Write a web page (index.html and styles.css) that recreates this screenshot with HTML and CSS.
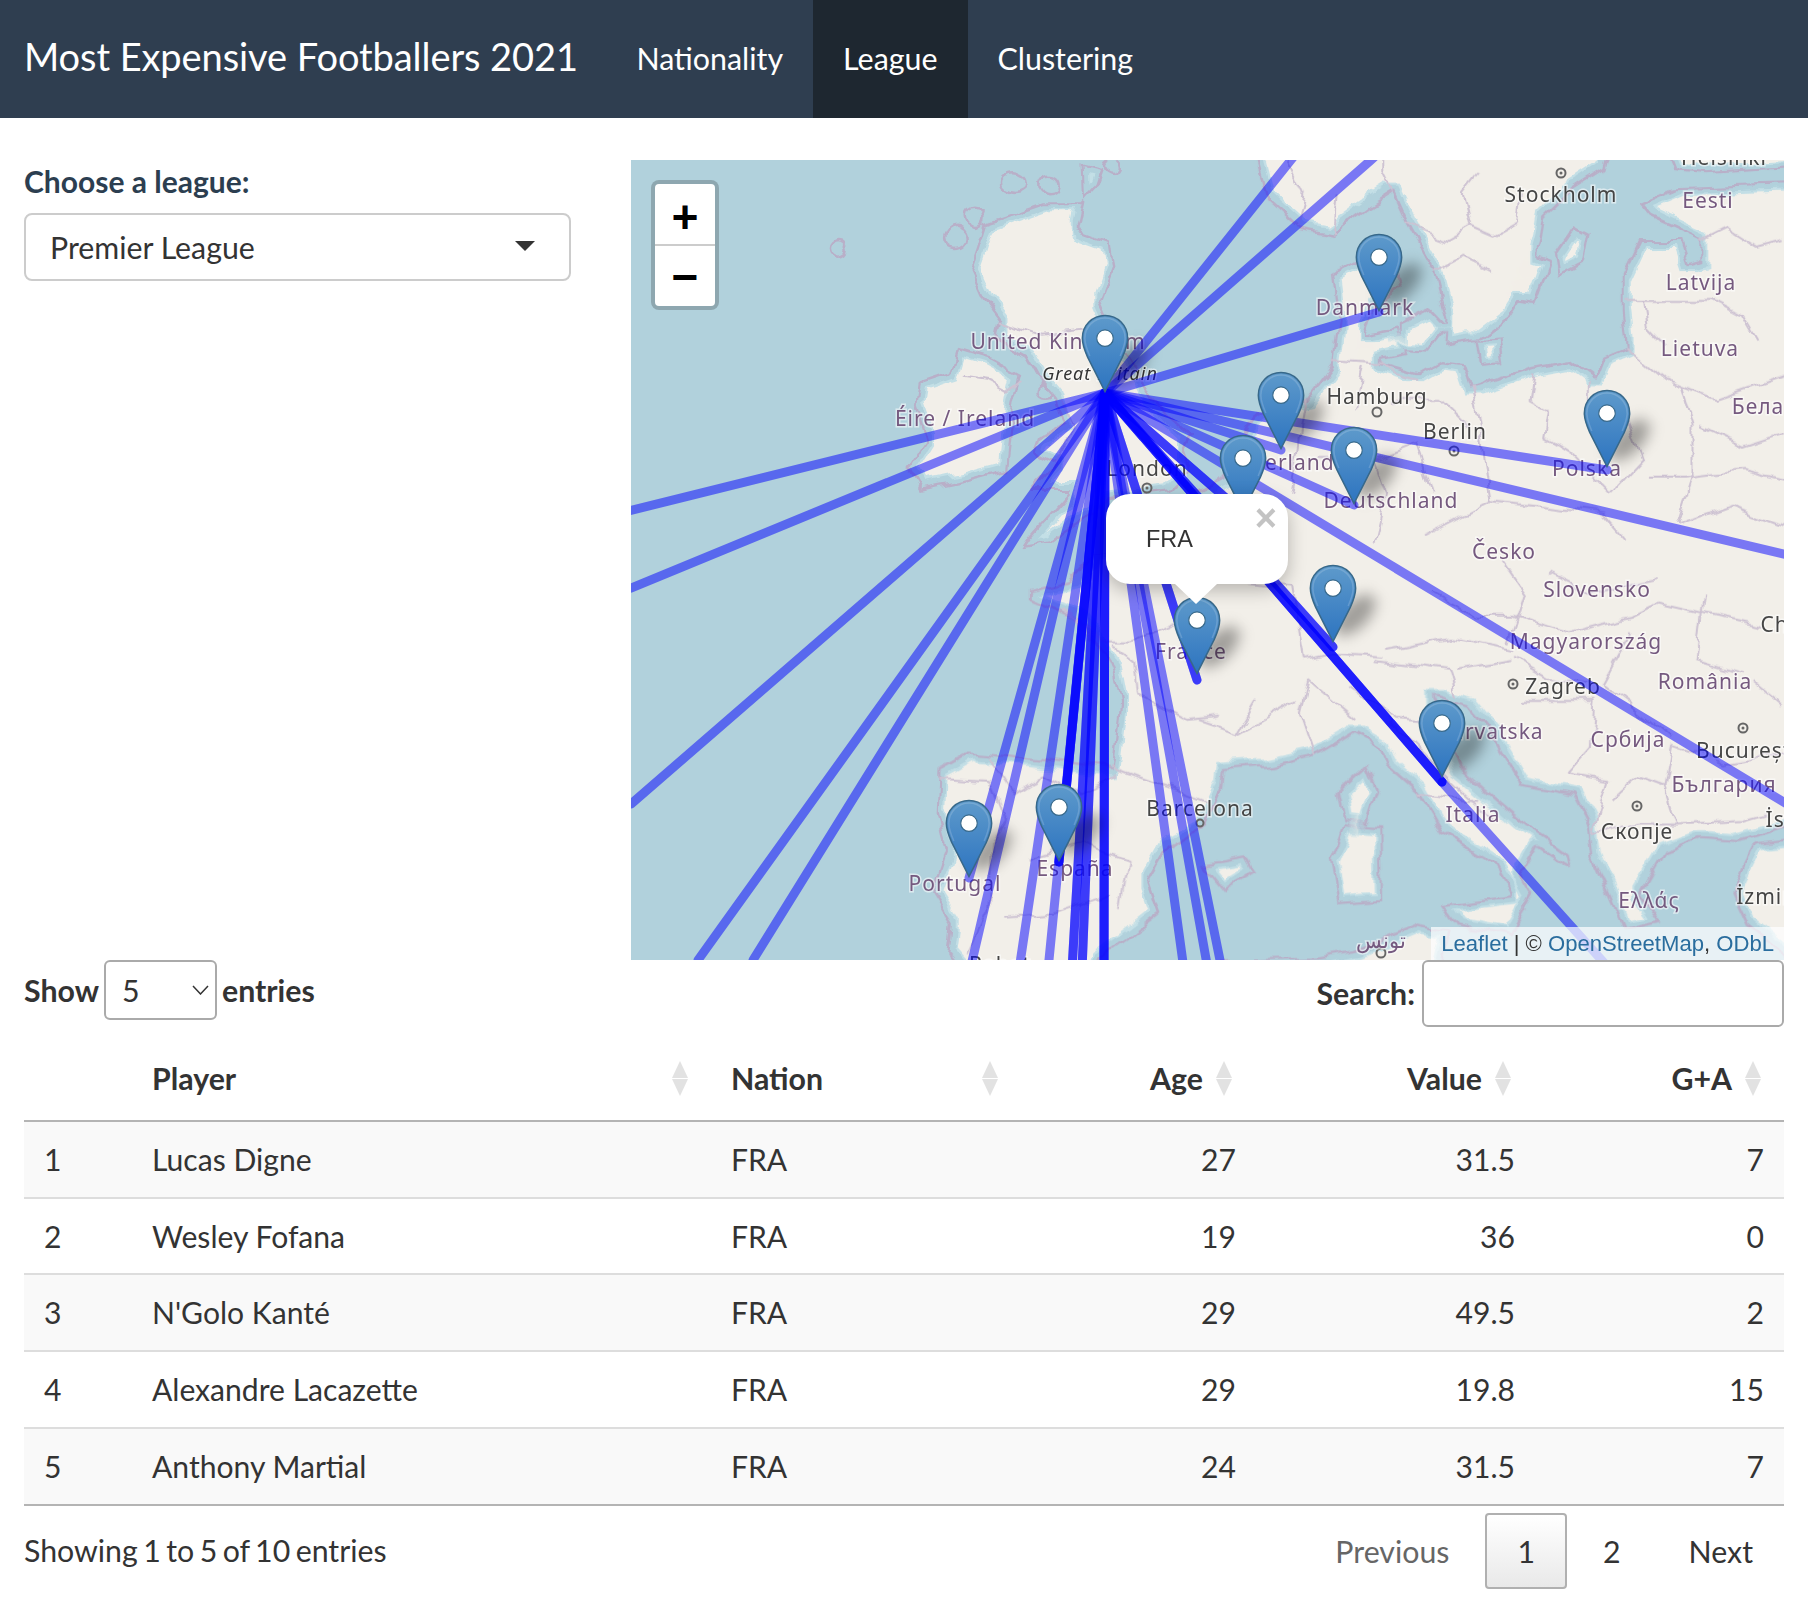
FILE: index.html
```html
<!DOCTYPE html>
<html lang="en">
<head>
<meta charset="utf-8">
<title>Most Expensive Footballers 2021</title>
<link rel="stylesheet" href="styles.css">
</head>
<body>
<nav class="navbar">
  <a class="brand">Most Expensive Footballers 2021</a>
  <a class="tab">Nationality</a>
  <a class="tab active">League</a>
  <a class="tab">Clustering</a>
</nav>
<main class="page">
  <section class="top">
    <div class="side">
      <label class="field-label">Choose a league:</label>
      <div class="selectize"><span>Premier League</span><i class="caret"></i></div>
    </div>
    <div class="map">
      <svg class="map-svg" viewBox="631 160 1153 800" width="1153" height="800" xmlns="http://www.w3.org/2000/svg">
        <defs>
          <linearGradient id="pinfill" x1="0" y1="0" x2="0" y2="1">
            <stop offset="0" stop-color="#5e9acb"/>
            <stop offset="1" stop-color="#2d74c0"/>
          </linearGradient>
          <filter id="erode2"><feMorphology operator="erode" radius="2"/></filter>
          <filter id="erode4"><feMorphology operator="erode" radius="6"/></filter>
          <filter id="erode6"><feMorphology operator="erode" radius="8"/></filter>
          <filter id="wiggle" filterUnits="userSpaceOnUse" x="600" y="130" width="1230" height="860">
            <feTurbulence type="fractalNoise" baseFrequency=".035" numOctaves="3" seed="7" result="n"/>
            <feDisplacementMap in="SourceGraphic" in2="n" scale="14" xChannelSelector="R" yChannelSelector="G"/>
          </filter>
          <symbol id="pin" viewBox="0 0 25 41">
            <path class="pin-body" d="M12.5.7C5.9.7.7 5.900.7 12.500c0 3.200 1.200 6.400 2.800 10L12.500 40.300l9-17.800c1.600-3.600 2.800-6.800 2.800-10C24.300 5.900 19.100.7 12.500.7z"/>
            <path class="pin-glow" d="M12.500 2C6.700 2 2 6.700 2 12.500c0 3 1.100 5.800 2.600 9.300"/>
            <path class="pin-glow" d="M12.500 2C18.300 2 23 6.700 23 12.500c0 3-1.100 5.800-2.600 9.300"/>
            <circle class="pin-hole" cx="12.500" cy="12.500" r="4.300"/>
          </symbol>
          <g id="land">
            <g transform="translate(630 160) scale(.3762 .3333)">
              <polygon points="1200,10 1255,25 1240,75 1195,130 1100,130 1010,165 945,190 925,265 905,330 945,430 985,490 975,540 1050,590 1085,660 1130,720 1150,790 1090,830 1075,880 1130,910 1060,990 1170,990 1060,1130 1040,1165 1120,1150 1280,1020 1440,1000 1500,930 1480,870 1500,830 1390,720 1340,600 1290,510 1255,420 1285,330 1275,245 1190,210 1205,130"/>
              <polygon points="870,560 960,590 1040,640 1020,730 1010,830 1000,930 900,960 770,990 740,930 790,840 760,740 770,670 850,640"/>
            </g>
            <g transform="translate(630 560) scale(.3762 .3333)">
              <polygon points="820,625 900,575 1090,595 1280,625 1300,440 1280,320 1200,190 1060,120 1060,90 1170,60 1230,-20 1568,-20 1568,700 1530,800 1430,860 1380,960 1410,1060 1330,1130 1250,1195 1230,1260 900,1260 840,1180 850,1090 800,1000 840,870 815,770"/>
            </g>
            <g transform="translate(1200 160) scale(.3878 .3333)">
              <polygon points="-240,1240 -166,1146 -77,1025 57,955 120,800 147,748 270,720 340,610 355,480 340,340 400,300 500,300 520,380 450,440 430,520 470,610 560,640 620,600 680,610 700,680 860,620 960,600 1020,650 1040,590 1100,560 1090,460 1090,340 1130,240 1240,240 1260,310 1290,300 1290,240 1160,170 1130,130 1220,85 1580,70 1580,1250 -240,1250"/>
              <polygon points="130,-60 170,120 250,205 340,225 440,140 495,100 530,190 600,340 630,470 625,555 720,540 800,470 850,380 880,250 890,170 960,90 1040,30 1060,-60"/>
              <polygon points="1190,-60 1220,30 1300,40 1580,20 1580,-60"/>
              <polygon points="925,350 915,280 965,195 1005,220 990,310"/>
              <polygon points="815,420 870,285 905,300 865,430"/>
              <polygon points="715,540 775,535 785,610 725,615"/>
              <polygon points="515,490 595,445 640,500 590,575 515,570"/>
              <polygon points="420,525 510,505 530,585 440,605"/>
            </g>
            <g transform="translate(1200 560) scale(.3878 .3333)">
              <polygon points="-20,-20 1580,-20 1580,790 1380,850 1290,840 1200,880 1140,1000 1190,1085 1090,1110 1060,1030 1010,900 1000,800 960,710 830,680 760,540 690,440 600,410 670,620 830,780 950,880 960,930 870,860 830,940 860,1000 830,1060 800,1000 760,920 620,820 560,700 480,620 460,560 400,520 300,590 180,620 65,630 60,680 0,800 -20,800"/>
              <polygon points="1580,830 1430,850 1400,920 1370,1000 1410,1100 1580,1260"/>
              <polygon points="430,610 460,690 430,800 370,790 355,690"/>
              <polygon points="370,795 465,805 470,1020 355,1030 335,900"/>
              <polygon points="620,1030 820,1000 840,1050 800,1130 660,1100"/>
              <polygon points="0,910 120,885 145,935 60,995"/>
              <polygon points="-20,1200 300,1190 400,1170 570,1090 640,1110 610,1260 -20,1260"/>
            </g>
          </g>
        </defs>

        <g class="tiles">
          <rect class="sea" x="631" y="160" width="1153" height="800"/>
          <g class="geo">
            <g transform="translate(630 160) scale(.3762 .3333)">
              <ellipse class="ring" cx="1020" cy="68" rx="34" ry="28"/>
              <ellipse class="ring" cx="1115" cy="75" rx="27" ry="28"/>
              <ellipse class="ring" cx="920" cy="175" rx="25" ry="26"/>
              <ellipse class="ring" cx="865" cy="235" rx="30" ry="32"/>
              <ellipse class="ring" cx="555" cy="265" rx="21" ry="22"/>
              <ellipse class="ring" cx="1100" cy="690" rx="22" ry="20"/>
              <ellipse class="ring" cx="1285" cy="20" rx="25" ry="22"/>
            </g>
            <use href="#land" class="coast-line"/>
            <use href="#land" class="coast-gap"/>
            <use href="#land" class="coast-shallow"/>
            <use href="#land" class="coast-fill"/>

            <g transform="translate(630 160) scale(.3762 .3333)">
              <polyline class="border" points="985,490 1090,530 1180,520 1290,510"/>
              <polyline class="border" points="1130,910 1180,800 1150,720"/>
              <polyline class="border" points="890,650 950,660 1000,690 1040,660"/>
            </g>
            <g transform="translate(630 560) scale(.3762 .3333)">
              <polyline class="border" points="1280,620 1350,650 1450,690 1540,730"/>
              <polyline class="border" points="820,650 960,660 1000,780 960,850 950,1060 900,1180"/>
              <polyline class="border" points="950,590 1020,700 1100,640 1200,700 1300,640"/>
              <polyline class="border" points="1060,900 1200,850 1320,900 1300,1050"/>
              <polyline class="border" points="1000,1070 1130,1060 1280,1000"/>
              <polyline class="border" points="1290,260 1340,300 1350,400 1480,480 1568,470"/>
              <polyline class="border" points="1340,250 1480,180 1568,200"/>
              <polyline class="border" points="1150,150 1270,250 1340,250"/>
            </g>
            <g transform="translate(1200 160) scale(.3878 .3333)">
              <polyline class="border" points="495,100 470,40 470,0"/>
              <polyline class="border" points="530,190 640,240 700,200 760,230 820,190"/>
              <polyline class="border" points="600,340 680,290 750,330"/>
              <polyline class="border" points="700,200 680,100 720,40"/>
              <polyline class="border" points="820,190 830,100"/>
              <polyline class="border" points="250,200 270,100 230,0"/>
              <polyline class="border" points="340,220 350,100"/>
              <polyline class="border" points="1290,240 1360,200 1440,260 1505,240"/>
              <polyline class="border" points="1100,420 1200,420 1320,420 1400,470 1440,550"/>
              <polyline class="border" points="1100,560 1200,660 1240,680 1330,720 1505,650"/>
              <polyline class="border" points="1240,680 1270,800 1270,950 1230,1100"/>
              <polyline class="border" points="1140,420 1150,500 1200,560"/>
              <polyline class="border" points="700,680 720,780 740,950 750,1020"/>
              <polyline class="border" points="580,1120 750,1020 900,1040 1040,1060 1100,1140"/>
              <polyline class="border" points="860,640 850,730 900,760"/>
              <polyline class="border" points="1000,660 1000,750 1100,760"/>
              <polyline class="border" points="900,760 890,830 960,880"/>
              <polyline class="border" points="1100,770 1140,900 1060,1000"/>
              <polyline class="border" points="960,880 1060,1000"/>
              <polyline class="border" points="1150,950 1250,950 1400,930 1505,960"/>
              <polyline class="border" points="470,610 500,640 560,660"/>
              <polyline class="border" points="420,620 400,750"/>
              <polyline class="border" points="500,720 620,720 690,800"/>
              <polyline class="border" points="450,900 560,850 600,1000"/>
              <polyline class="border" points="300,900 450,900 480,1000 450,1150"/>
              <polyline class="border" points="270,720 250,870 230,1000"/>
              <polyline class="border" points="340,600 470,610"/>
              <polyline class="border" points="1290,800 1400,860 1505,820"/>
              <polyline class="border" points="1230,1100 1370,1040 1505,1100"/>
            </g>
            <g transform="translate(1200 560) scale(.3878 .3333)">
              <polyline class="border" points="300,590 260,450 280,360"/>
              <polyline class="border" points="270,300 340,280 470,290"/>
              <polyline class="border" points="480,270 650,230 810,270"/>
              <polyline class="border" points="450,300 640,330 660,410"/>
              <polyline class="border" points="660,330 800,300"/>
              <polyline class="border" points="800,250 840,100 780,0"/>
              <polyline class="border" points="810,170 950,220 1110,170 1180,130"/>
              <polyline class="border" points="810,290 900,350 1020,370"/>
              <polyline class="border" points="1110,220 1040,370"/>
              <polyline class="border" points="1040,370 1160,480 1220,540"/>
              <polyline class="border" points="1220,560 1350,610 1505,580"/>
              <polyline class="border" points="1220,560 1200,680 1230,790"/>
              <polyline class="border" points="1010,820 1130,790 1230,790 1400,780 1460,760"/>
              <polyline class="border" points="1060,720 1130,650 1200,680"/>
              <polyline class="border" points="830,420 1020,420 1010,560 950,640"/>
              <polyline class="border" points="950,640 1050,660 1010,820"/>
              <polyline class="border" points="280,360 400,480"/>
              <polyline class="border" points="390,380 500,470 600,480"/>
              <polyline class="border" points="480,470 640,650 760,780"/>
              <polyline class="border" points="560,700 720,720"/>
              <polyline class="border" points="0,480 100,520 150,420"/>
              <polyline class="border" points="90,60 240,80 270,300"/>
              <polyline class="border" points="100,520 250,420"/>
              <polyline class="border" points="1300,100 1280,300 1400,340"/>
              <polyline class="border" points="1180,130 1330,170 1450,200"/>
              <polyline class="border" points="1420,360 1505,440"/>
              <polyline class="border" points="900,40 1010,100 1180,60"/>
              <polyline class="border" points="600,100 710,170 810,170"/>
            </g>
          </g>

          <circle class="dot" cx="1561" cy="173" r="4.500"/><circle class="dot-in" cx="1561" cy="173" r="1.500"/>
          <circle class="dot" cx="1377" cy="412" r="4.500"/>
          <circle class="dot" cx="1454" cy="451" r="4.500"/><circle class="dot-in" cx="1454" cy="451" r="1.500"/>
          <circle class="dot" cx="1147" cy="488" r="4.500"/><circle class="dot-in" cx="1147" cy="488" r="1.500"/>
          <circle class="dot" cx="1513" cy="684" r="4.500"/><circle class="dot-in" cx="1513" cy="684" r="1.500"/>
          <circle class="dot" cx="1743" cy="728" r="4.500"/><circle class="dot-in" cx="1743" cy="728" r="1.500"/>
          <circle class="dot" cx="1637" cy="806" r="4.500"/><circle class="dot-in" cx="1637" cy="806" r="1.500"/>
          <circle class="dot" cx="1200" cy="823" r="3.500"/>
          <circle class="dot" cx="1381" cy="953" r="4.500"/>

          <text class="city" x="1561" y="202">Stockholm</text>
          <text class="country" x="1708" y="208">Eesti</text>
          <text class="country" x="1701" y="290">Latvija</text>
          <text class="country" x="1700" y="356">Lietuva</text>
          <text class="country" x="1758" y="414">Бела</text>
          <text class="country" x="1365" y="315">Danmark</text>
          <text class="country" x="1058" y="349">United Kingdom</text>
          <text class="region" x="1100" y="380">Great Britain</text>
          <text class="country" x="965" y="426">Éire / Ireland</text>
          <text class="city" x="1377" y="404">Hamburg</text>
          <text class="city" x="1455" y="439">Berlin</text>
          <text class="country" x="1587" y="476">Polska</text>
          <text class="country" x="1278" y="470">Nederland</text>
          <text class="country" x="1391" y="508">Deutschland</text>
          <text class="city" x="1147" y="476">London</text>
          <text class="country" x="1504" y="559">Česko</text>
          <text class="country" x="1597" y="597">Slovensko</text>
          <text class="country" x="1586" y="649">Magyarország</text>
          <text class="city" x="1563" y="694">Zagreb</text>
          <text class="country" x="1705" y="689">România</text>
          <text class="country" x="1496" y="739">Hrvatska</text>
          <text class="country" x="1628" y="747">Србија</text>
          <text class="city" x="1747" y="758">București</text>
          <text class="country" x="1724" y="792">България</text>
          <text class="country" x="1473" y="822">Italia</text>
          <text class="city" x="1637" y="839">Скопје</text>
          <text class="city" x="1200" y="816">Barcelona</text>
          <text class="country" x="955" y="891">Portugal</text>
          <text class="country" x="1075" y="876">España</text>
          <text class="country" x="1191" y="659">France</text>
          <text class="country" x="1649" y="908">Ελλάς</text>
          <text class="city" x="1764" y="904">İzmir</text>
          <text class="city" x="1810" y="827">İstanbul</text>
          <text class="city" x="1807" y="632">Chișinău</text>
          <text class="country" x="1381" y="948">تونس</text>
          <text class="city" x="1724" y="165">Helsinki</text>
          <text class="city" x="1000" y="972">Rabat</text>
        </g>

        <g class="routes">
          <path d="M1105 393L584 522"/>
          <path d="M1105 393L631 588L500 642"/>
          <path d="M1105 393L631 804"/>
          <path d="M1105 393L698 960"/>
          <path d="M1105 393L753 960"/>
          <path d="M1105 393L1291 160L1310 136"/>
          <path d="M1105 393L1371 160L1400 134"/>
          <path d="M1105 393L970 970"/>
          <path d="M1105 393L1019 970"/>
          <path d="M1105 393L1048 970"/>
          <path d="M1105 393L1072 970"/>
          <path d="M1105 393L1072 970"/>
          <path d="M1105 393L1082 970"/>
          <path d="M1105 393L1082 970"/>
          <path d="M1105 393L1104 970"/>
          <path d="M1105 393L1104 970"/>
          <path d="M1105 393L1104 970"/>
          <path d="M1105 393L1184 970"/>
          <path d="M1105 393L1208 970"/>
          <path d="M1105 393L1222 970"/>
          <path d="M1105 393L1059 862"/>
          <path d="M1105 393L1059 862"/>
          <path d="M1105 393L1059 862"/>
          <path d="M1105 393L969 878"/>
          <path d="M1105 393L1197 680"/>
          <path d="M1105 393L1197 680"/>
          <path d="M1105 393L1379 312"/>
          <path d="M1105 393L1281 450"/>
          <path d="M1105 393L1243 513"/>
          <path d="M1105 393L1243 513"/>
          <path d="M1105 393L1354 505"/>
          <path d="M1105 393L1607 470"/>
          <path d="M1105 393L1800 558"/>
          <path d="M1105 393L1800 812"/>
          <path d="M1105 393L1333 647"/>
          <path d="M1105 393L1333 647"/>
          <path d="M1105 393L1442 782"/>
          <path d="M1105 393L1442 782"/>
          <path d="M1105 393L1442 782"/>
          <path d="M1442 782L1615 975"/>
        </g>

        <g class="shadows">
          <ellipse cx="1127" cy="365" rx="26" ry="13" transform="rotate(-45 1127 365)"/>
          <ellipse cx="1401" cy="284" rx="26" ry="13" transform="rotate(-45 1401 284)"/>
          <ellipse cx="1303" cy="422" rx="26" ry="13" transform="rotate(-45 1303 422)"/>
          <ellipse cx="1376" cy="477" rx="26" ry="13" transform="rotate(-45 1376 477)"/>
          <ellipse cx="1629" cy="440" rx="26" ry="13" transform="rotate(-45 1629 440)"/>
          <ellipse cx="1355" cy="615" rx="26" ry="13" transform="rotate(-45 1355 615)"/>
          <ellipse cx="1219" cy="647" rx="26" ry="13" transform="rotate(-45 1219 647)"/>
          <ellipse cx="1464" cy="750" rx="26" ry="13" transform="rotate(-45 1464 750)"/>
          <ellipse cx="1081" cy="834" rx="26" ry="13" transform="rotate(-45 1081 834)"/>
          <ellipse cx="991" cy="850" rx="26" ry="13" transform="rotate(-45 991 850)"/>
        </g>

        <use href="#pin" x="1081" y="314" width="48" height="79"/>
        <use href="#pin" x="1355" y="233" width="48" height="79"/>
        <use href="#pin" x="1257" y="371" width="48" height="79"/>
        <use href="#pin" x="1219" y="434" width="48" height="79"/>
        <use href="#pin" x="1330" y="426" width="48" height="79"/>
        <use href="#pin" x="1583" y="389" width="48" height="79"/>
        <use href="#pin" x="1309" y="564" width="48" height="79"/>
        <use href="#pin" x="1173" y="596" width="48" height="79"/>
        <use href="#pin" x="1418" y="699" width="48" height="79"/>
        <use href="#pin" x="1035" y="783" width="48" height="79"/>
        <use href="#pin" x="945" y="799" width="48" height="79"/>
      </svg>

      <div class="zoom-ctl">
        <a class="zoom-btn">+</a>
        <a class="zoom-btn">−</a>
      </div>
      <div class="popup">
        <span class="popup-text">FRA</span>
        <span class="popup-close">×</span>
      </div>
      <div class="popup-tip"></div>
      <div class="attribution"><a>Leaflet</a> | © <a>OpenStreetMap</a>, <a>ODbL</a></div>
    </div>
  </section>

  <section class="controls">
    <label class="length">Show
      <span class="length-box"><select class="length-select"><option>5</option></select>
        <svg class="chevron" viewBox="0 0 17 10" width="17" height="10"><path d="M1 1l7.500 8L16 1"/></svg>
      </span>
      entries</label>
    <label class="search">Search:<input class="search-input" type="text"></label>
  </section>

  <table class="data">
    <colgroup>
      <col class="c-n"><col class="c-player"><col class="c-nation"><col class="c-age"><col class="c-value"><col class="c-ga">
    </colgroup>
    <thead>
      <tr>
        <th></th>
        <th><div class="th"><span>Player</span><i class="sort"></i></div></th>
        <th><div class="th"><span>Nation</span><i class="sort"></i></div></th>
        <th class="num"><div class="th end"><span>Age</span><i class="sort"></i></div></th>
        <th class="num"><div class="th end"><span>Value</span><i class="sort"></i></div></th>
        <th class="num"><div class="th end"><span>G+A</span><i class="sort"></i></div></th>
      </tr>
    </thead>
    <tbody>
      <tr><td>1</td><td>Lucas Digne</td><td>FRA</td><td class="num">27</td><td class="num">31.5</td><td class="num last">7</td></tr>
      <tr><td>2</td><td>Wesley Fofana</td><td>FRA</td><td class="num">19</td><td class="num">36</td><td class="num last">0</td></tr>
      <tr><td>3</td><td>N'Golo Kanté</td><td>FRA</td><td class="num">29</td><td class="num">49.5</td><td class="num last">2</td></tr>
      <tr><td>4</td><td>Alexandre Lacazette</td><td>FRA</td><td class="num">29</td><td class="num">19.8</td><td class="num last">15</td></tr>
      <tr><td>5</td><td>Anthony Martial</td><td>FRA</td><td class="num">24</td><td class="num">31.5</td><td class="num last">7</td></tr>
    </tbody>
  </table>

  <section class="footer">
    <div class="info">Showing 1 to 5 of 10 entries</div>
    <div class="pager">
      <a class="pg disabled">Previous</a>
      <a class="pg current">1</a>
      <a class="pg">2</a>
      <a class="pg">Next</a>
    </div>
  </section>
</main>
</body>
</html>
```

FILE: styles.css
```css
* { box-sizing: border-box; }
html, body { margin: 0; padding: 0; }
body {
  font-family: Lato, "Noto Sans", sans-serif;
  font-size: 30.3px;
  line-height: 43px;
  color: #333;
  background: #fff;
}

/* navbar */
.navbar {
  display: flex;
  align-items: stretch;
  height: 118px;
  padding-left: 24px;
  background: #2f3e50;
  color: #fff;
}
.brand {
  display: flex;
  align-items: center;
  padding-right: 28.500px;
  padding-bottom: 5px;
  font-size: 38px;
  letter-spacing: -.08px;
}
.tab {
  display: flex;
  align-items: center;
  padding: 0 30px 2px;
  font-size: 30.4px;
}
.tab.active { background: #1e2730; }

/* top row */
.page { padding: 42px 24px 0; }
.top { display: flex; gap: 60px; height: 800px; }
.side { width: 547px; flex: none; }
.field-label {
  display: block;
  height: 53px;
  font-size: 30px;
  font-weight: 700;
  color: #2c3e50;
  line-height: 42px;
}
.selectize {
  display: flex;
  align-items: center;
  justify-content: space-between;
  height: 68px;
  padding: 0 34px 0 24px;
  border: 2px solid #ccc;
  border-radius: 8px;
}
.caret {
  width: 0;
  height: 0;
  border-style: solid;
  border-width: 10px 10px 0;
  border-color: #333 transparent transparent;
  margin-top: -2px;
}

/* map */
.map {
  position: relative;
  flex: 1;
  overflow: hidden;
  background: #b1d1dc;
}
.map-svg { display: block; }
.tiles { filter: blur(.6px); }
.geo { filter: url(#wiggle); }
.sea { fill: #b1d1dc; }
.ring, .border { vector-effect: non-scaling-stroke; }
.ring { fill: none; stroke: #b9afc8; stroke-width: 2.500px; }
.coast-line { fill: #b9afc8; }
.coast-gap { fill: #b1d1dc; filter: url(#erode2); }
.coast-shallow { fill: #c3dfe6; filter: url(#erode4); }
.coast-fill { fill: #f2efe9; filter: url(#erode6); }
.border { fill: none; stroke: #cdc2d2; stroke-width: 2px; stroke-linejoin: round; }
.dot { fill: none; stroke: #666; stroke-width: 2px; }
.dot-in { fill: #666; }
.country, .city, .region {
  font-family: "Noto Sans", sans-serif;
  font-size: 21px;
  letter-spacing: 1px;
  text-anchor: middle;
  stroke: rgba(255, 255, 255, .55);
  stroke-width: 3px;
  paint-order: stroke;
}
.country { fill: #75597f; }
.city { fill: #454545; }
.region { fill: #333; font-size: 18px; font-style: italic; }
.routes path {
  fill: none;
  stroke: #00f;
  stroke-opacity: .5;
  stroke-width: 9px;
  stroke-linecap: round;
}
.shadows ellipse { fill: rgba(0, 0, 0, .34); filter: blur(7px); }
.pin-body { fill: url(#pinfill); stroke: #37688a; stroke-width: .8px; }
.pin-glow { fill: none; stroke: #ffffff; stroke-opacity: .16; stroke-width: .8px; }
.pin-hole { fill: #fff; stroke: #37688a; stroke-width: .6px; }

.zoom-ctl {
  position: absolute;
  top: 20px;
  left: 20px;
  width: 68px;
  padding: 4px;
  background: #8ea7b0;
  border-radius: 8px;
}
.zoom-btn {
  display: block;
  height: 60px;
  padding-top: 5px;
  background: #fff;
  font-family: "Liberation Mono", "DejaVu Sans Mono", monospace;
  font-size: 46px;
  font-weight: 700;
  line-height: 60px;
  text-align: center;
  color: #000;
}
.zoom-btn:first-child { border-bottom: 2px solid #ccc; height: 62px; line-height: 64px; border-radius: 4px 4px 0 0; }
.zoom-btn:last-child { border-radius: 0 0 4px 4px; }

.popup {
  position: absolute;
  left: 475px;
  top: 334px;
  width: 182px;
  height: 90px;
  background: #fff;
  border-radius: 24px;
  box-shadow: 0 6px 18px rgba(0, 0, 0, .25);
  font-family: "Liberation Sans", Arial, sans-serif;
}
.popup-text {
  position: absolute;
  left: 40px;
  top: 26px;
  font-size: 23.500px;
  line-height: 38px;
  color: #333;
}
.popup-close {
  position: absolute;
  right: 11px;
  top: 7px;
  font-size: 38px;
  line-height: 34px;
  font-weight: 700;
  color: #c3c3c3;
}
.popup-tip {
  position: absolute;
  left: 544px;
  top: 424px;
  width: 0;
  height: 0;
  border-style: solid;
  border-width: 20px 21px 0;
  border-color: #fff transparent transparent;
}
.attribution {
  position: absolute;
  right: 0;
  bottom: 0;
  height: 33px;
  padding: 0 10px;
  background: rgba(255, 255, 255, .7);
  font-family: "Liberation Sans", Arial, sans-serif;
  font-size: 22.100px;
  line-height: 33px;
  color: #333;
}
.attribution a { color: #2a6d9e; }

/* controls */
.controls {
  display: flex;
  justify-content: space-between;
  align-items: flex-start;
  height: 66px;
  font-weight: 700;
}
.length { display: flex; align-items: center; gap: 5px; height: 60px; }
.length-box { position: relative; display: block; width: 113px; height: 60px; }
.length-select {
  width: 100%;
  height: 100%;
  padding: 0 0 0 16px;
  appearance: none;
  font: 400 30.300px Lato, sans-serif;
  color: #333;
  background: #fff;
  border: 2px solid #aaa;
  border-radius: 6px;
}
.chevron {
  position: absolute;
  right: 8px;
  top: 25px;
  fill: none;
  stroke: #333;
  stroke-width: 1.500px;
}
.search { display: flex; align-items: center; gap: 7px; height: 67px; }
.search-input {
  width: 362px;
  height: 67px;
  padding: 0 12px;
  border: 2px solid #aaa;
  border-radius: 6px;
  background: #fff;
}

/* table */
.data {
  width: 100%;
  margin-top: 10px;
  table-layout: fixed;
  border-collapse: separate;
  border-spacing: 0;
}
.c-n { width: 108px; }
.c-player { width: 579px; }
.c-nation { width: 309.500px; }
.c-age { width: 234.500px; }
.c-value { width: 279px; }
.c-ga { width: 250px; }
.data th {
  padding: 21px 20px 20px;
  text-align: left;
  font-weight: 700;
  border-bottom: 2px solid #b4b4b4;
}
.data td {
  padding: 16px 20px;
  font-size: 30.1px;
  line-height: 42.700px;
  border-bottom: 2px solid #ddd;
}
.data tbody tr:nth-child(odd) td { background: #f9f9f9; }
.data tbody tr:last-child td { border-bottom-color: #b4b4b4; }
.data .num { text-align: right; padding-right: 19px; }
.data .num.last { padding-right: 20px; }
.th { display: flex; align-items: center; justify-content: space-between; }
.th:not(.end) .sort { margin-right: 2px; }
.th.end { justify-content: flex-end; gap: 13px; margin-right: 3px; }
.sort {
  display: flex;
  flex-direction: column;
  gap: 1px;
  width: 17px;
  flex: none;
}
.sort::before, .sort::after {
  content: "";
  width: 0;
  height: 0;
  border-style: solid;
  border-color: transparent;
}
.sort::before { border-width: 0 8.500px 17px; border-bottom-color: #e2e2e2; }
.sort::after { border-width: 17px 8.500px 0; border-top-color: #e2e2e2; }

/* footer */
.footer {
  display: flex;
  justify-content: space-between;
  align-items: center;
  margin-top: 7px;
  height: 76px;
}
.info { word-spacing: -2.300px; }
.pager { display: flex; gap: 4px; margin-right: -1px; }
.pg {
  display: block;
  height: 76px;
  padding: 0 30px;
  border: 2px solid transparent;
  border-radius: 4px;
  line-height: 72px;
  color: #333;
}
.pg.disabled { color: #666; }
.pg.current {
  border-color: #b0b0b0;
  background: linear-gradient(#fff, #e9e9e9);
}
```
